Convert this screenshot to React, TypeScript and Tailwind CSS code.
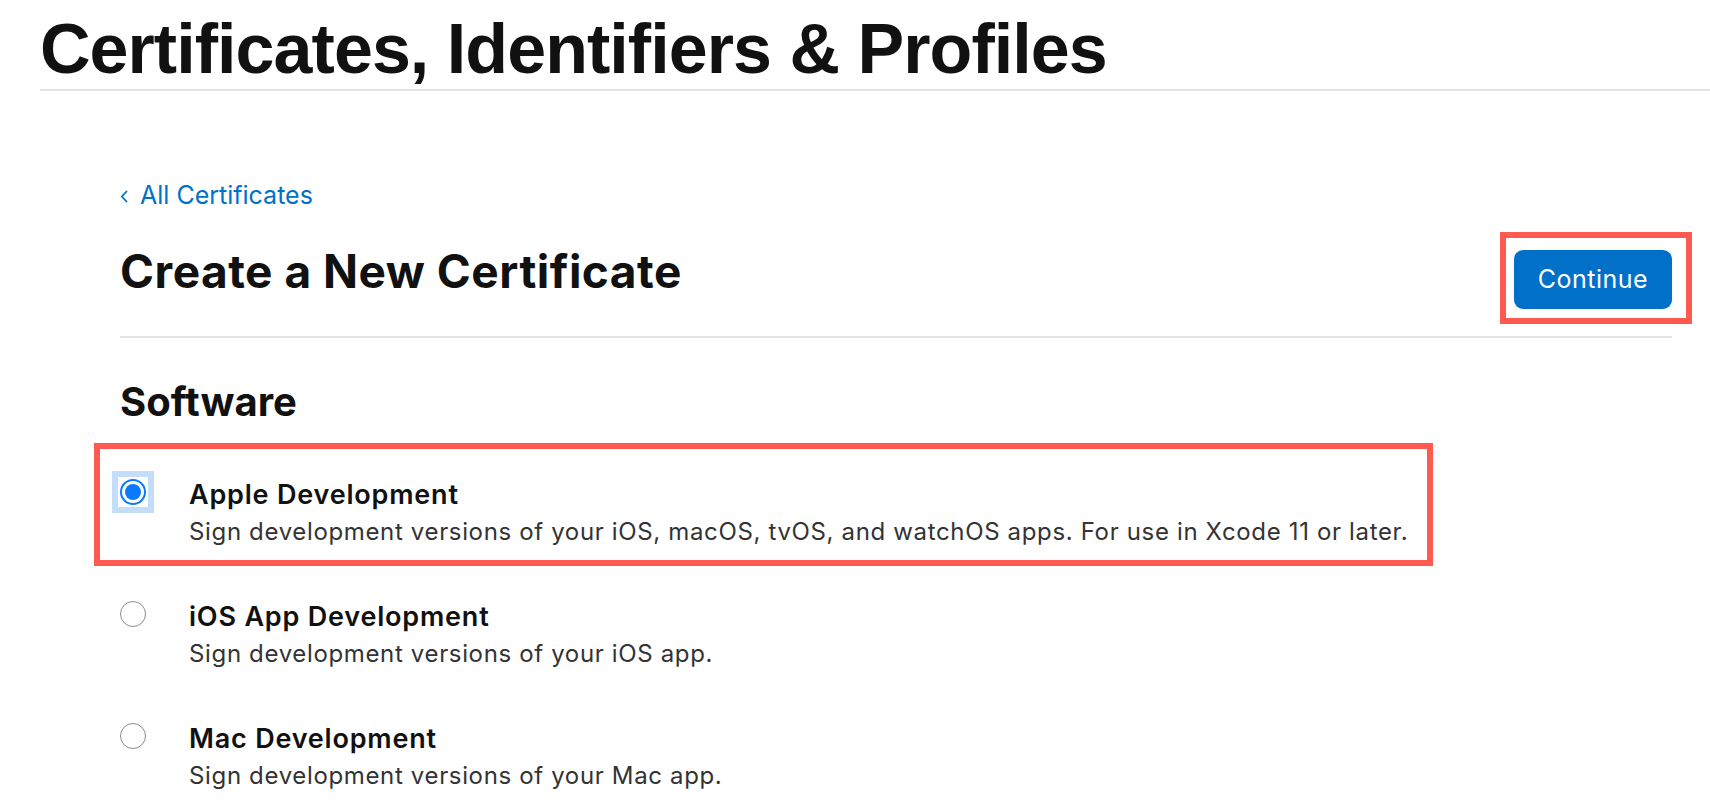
import React from "react"

type CertOption = {
	id: string
	title: string
	description: string
}

const options: CertOption[] = [
	{
		id: "apple-dev",
		title: "Apple Development",
		description:
			"Sign development versions of your iOS, macOS, tvOS, and watchOS apps. For use in Xcode 11 or later.",
	},
	{
		id: "ios-dev",
		title: "iOS App Development",
		description: "Sign development versions of your iOS app.",
	},
	{
		id: "mac-dev",
		title: "Mac Development",
		description: "Sign development versions of your Mac app.",
	},
]

function Radio({ checked }: { checked: boolean }) {
	return (
		<div className="relative mt-[2px] h-[26px] w-[26px] shrink-0">
			{checked && (
				<span className="absolute -inset-[2px] bg-white ring-[6px] ring-[#c3ddfb]" />
			)}
			<span
				className={
					checked
						? "relative flex h-[26px] w-[26px] items-center justify-center rounded-full border-2 border-[#0a7aff] bg-white"
						: "relative flex h-[26px] w-[26px] items-center justify-center rounded-full border-[1.5px] border-[#8c8c8c] bg-white"
				}
			>
				{checked && <span className="h-[16px] w-[16px] rounded-full bg-[#0a7aff]" />}
			</span>
		</div>
	)
}

export default function App() {
	const selected = "apple-dev"

	return (
		<div className="min-h-screen bg-white font-['Inter',sans-serif] text-[#111111]">
			<header className="ml-[40px] border-b-2 border-[#e4e4e4] pt-[14px] pb-[5px]">
				<h1 className="font-['Liberation_Sans',Arial,sans-serif] text-[70px] font-bold leading-[70px] tracking-[-0.95px]">
					Certificates, Identifiers &amp; Profiles
				</h1>
			</header>

			<main className="ml-[120px] mr-[38px] pt-[89px]">
				<a className="flex items-center text-[25px] leading-[30px] text-[#0070c9]" href="#">
					<svg
						className="mr-[12px] mt-[2px]"
						width="8"
						height="13"
						viewBox="0 0 8 13"
						fill="none"
					>
						<path
							d="M6.5 1.5 L1.8 6.5 L6.5 11.5"
							stroke="#0070c9"
							strokeWidth="1.8"
							strokeLinecap="round"
							strokeLinejoin="round"
						/>
					</svg>
					All Certificates
				</a>

				<div className="mt-[35px] flex items-start justify-between">
					<h2 className="text-[46px] font-bold leading-[52px] tracking-[0.5px]">
						Create a New Certificate
					</h2>
					<div className="relative mt-[5px]">
						<span className="pointer-events-none absolute -left-[14px] -top-[18px] -right-[20px] -bottom-[15px] border-[6px] border-[#ff5a4f]" />
						<button className="flex h-[59px] w-[158px] items-center justify-center rounded-[9px] bg-[#0070c9] text-[25px] tracking-[0.5px] text-white">
							Continue
						</button>
					</div>
				</div>

				<hr className="mt-[27px] border-0 border-t-2 border-[#e4e4e4]" />

				<h3 className="mt-[41px] text-[40px] font-bold leading-[46px]">Software</h3>

				<div className="mt-[52px] flex flex-col gap-[48px]">
					{options.map((option) => (
						<div key={option.id} className="relative flex items-start">
							{option.id === selected && (
								<span className="pointer-events-none absolute -left-[26px] -top-[34px] -bottom-[15px] right-[239px] border-[6px] border-[#ff5a4f]" />
							)}
							<Radio checked={option.id === selected} />
							<div className="ml-[43px]">
								<div className="text-[27px] font-semibold leading-[36px] tracking-[0.8px]">
									{option.title}
								</div>
								<div className="text-[24px] leading-[38px] tracking-[0.65px] text-[#333333]">
									{option.description}
								</div>
							</div>
						</div>
					))}
				</div>
			</main>
		</div>
	)
}
